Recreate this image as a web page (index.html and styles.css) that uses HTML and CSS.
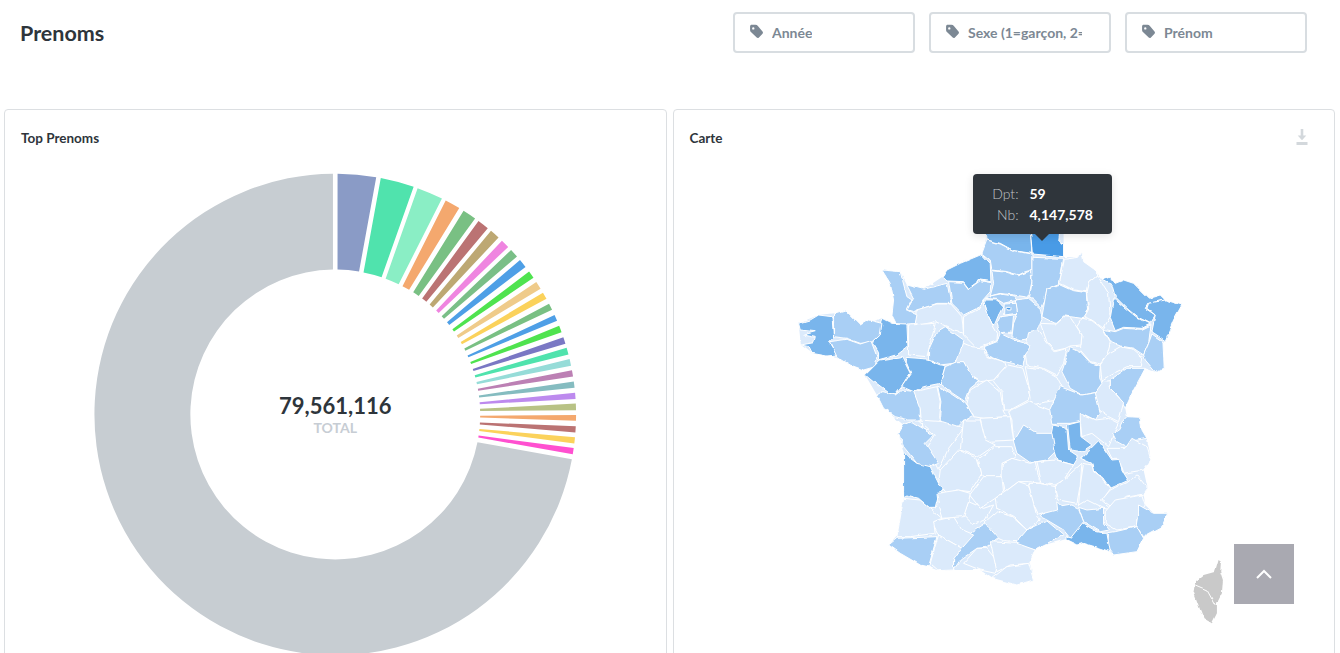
FILE: index.html
```html
<!DOCTYPE html>
<html lang="fr">
<head>
<meta charset="utf-8">
<title>Prenoms</title>
<link rel="stylesheet" href="styles.css">
</head>
<body>
<div class="page">
  <header class="topbar">
    <h1 class="page-title">Prenoms</h1>
    <div class="filters">
      <div class="filter">
        <svg class="tag" viewBox="0 0 14 14"><path fill-rule="evenodd" d="M2.500 .8h3.500c1 0 1.700.4 2.300 1l4.300 5.200c.6.700.5 1.500 0 2.100l-3.300 3.500c-.7.700-1.500.7-2.100.1L1.800 7.500C1.200 6.900 1 6.300 1 5.500V2.300C1 1.400 1.600.8 2.500.8zM4 3a1.100 1.100 0 1 0 0 2.200A1.100 1.100 0 0 0 4 3z"/></svg>
        <span class="filter-label">Année</span>
      </div>
      <div class="filter">
        <svg class="tag" viewBox="0 0 14 14"><path fill-rule="evenodd" d="M2.500 .8h3.500c1 0 1.700.4 2.300 1l4.300 5.200c.6.700.5 1.500 0 2.100l-3.300 3.500c-.7.700-1.500.7-2.100.1L1.800 7.500C1.200 6.900 1 6.300 1 5.500V2.300C1 1.400 1.600.8 2.500.8zM4 3a1.100 1.100 0 1 0 0 2.200A1.100 1.100 0 0 0 4 3z"/></svg>
        <span class="filter-label">Sexe (1=garçon, 2=fille)</span>
      </div>
      <div class="filter">
        <svg class="tag" viewBox="0 0 14 14"><path fill-rule="evenodd" d="M2.500 .8h3.500c1 0 1.700.4 2.300 1l4.300 5.200c.6.700.5 1.500 0 2.100l-3.300 3.500c-.7.700-1.500.7-2.100.1L1.800 7.500C1.200 6.900 1 6.300 1 5.500V2.300C1 1.400 1.600.8 2.500.8zM4 3a1.100 1.100 0 1 0 0 2.200A1.100 1.100 0 0 0 4 3z"/></svg>
        <span class="filter-label">Prénom</span>
      </div>
    </div>
  </header>

  <main class="cards">
    <section class="card">
      <div class="card-head"><h2 class="card-title">Top Prenoms</h2></div>
      <div class="chart">
        <svg id="donut" class="chart-svg" viewBox="5 158 661 500"></svg>
        <div class="total">
          <div class="total-value">79,561,116</div>
          <div class="total-label">TOTAL</div>
        </div>
      </div>
    </section>

    <section class="card">
      <div class="card-head">
        <h2 class="card-title">Carte</h2>
        <svg class="download" viewBox="0 0 12 16"><path d="M4.700 0h2.600v6.500h3L6 11.300 1.700 6.500h3z"/><rect x="0.500" y="13" width="11" height="3"/></svg>
      </div>
      <div class="chart">
        <svg class="chart-svg" viewBox="674 158 660 500">
          <defs>
            <filter id="rough" x="-5%" y="-5%" width="110%" height="110%" filterUnits="objectBoundingBox">
              <feTurbulence type="fractalNoise" baseFrequency="0.11" numOctaves="2" seed="4"/>
              <feDisplacementMap in="SourceGraphic" scale="3.500" xChannelSelector="R" yChannelSelector="G"/>
            </filter>
          </defs>
          <g filter="url(#rough)">
          <g class="map" transform="translate(780 220) scale(.33333)">
            <polygon class="land" points="617,60 617,20 850,20 850,112 895,112 905,95 910,125 950,160 967,180 990,172 1005,190 1030,180 1060,190 1105,235 1140,225 1155,240 1205,255 1180,300 1155,362 1148,365 1152,445 1125,455 1095,445 1060,510 1035,565 1040,590 1080,592 1085,630 1100,655 1112,720 1090,750 1102,805 1090,822 1095,855 1120,880 1162,880 1145,920 1090,950 1070,995 1000,1005 990,995 960,985 910,970 890,975 855,958 795,975 765,990 748,1030 760,1080 710,1095 635,1075 600,1050 520,1050 475,1052 445,1040 420,1035 360,1000 325,975 350,950 370,835 370,700 355,640 370,615 310,565 290,525 255,465 285,440 250,450 210,435 170,410 95,400 62,375 55,310 115,285 160,280 195,270 240,315 305,295 350,315 335,285 340,240 330,190 305,150 360,155 380,195 430,208 487,170 500,150 540,130 605,103"/>
            <polygon class="d2" points="617,20 750,20 755,100 700,92 660,70 620,60"/>
            <polygon class="d3" points="750,20 840,20 835,65 850,72 850,110 756,102"/>
            <polygon class="d1" points="605,100 620,60 660,72 700,92 755,102 755,150 735,155 715,165 680,155 635,150 630,120"/>
            <polygon class="d2" points="487,170 500,150 540,130 605,103 630,130 632,185 600,180 565,205 550,185 500,183"/>
            <polygon class="d1" points="635,152 680,157 712,167 752,152 755,185 745,232 700,225 660,220 630,228 640,190"/>
            <polygon class="d1" points="755,112 850,115 838,190 800,205 795,240 785,262 758,235 748,232 755,190"/>
            <polygon class="d0" points="838,190 852,118 895,112 905,95 910,125 945,150 950,165 925,185 918,215 880,210 850,195"/>
            <polygon class="d1" points="800,205 838,193 880,212 918,218 922,270 905,295 870,290 850,288 825,310 785,290 790,262"/>
            <polygon class="d0" points="925,185 950,165 985,220 990,290 970,325 935,300 912,292 925,268 918,215"/>
            <polygon class="d2" points="967,180 990,172 1005,190 1030,180 1060,190 1105,235 1140,225 1155,240 1105,250 1095,265 1125,285 1110,310 1070,290 1040,265 1005,230 995,195"/>
            <polygon class="d2" points="1000,235 1040,268 1070,292 1110,312 1085,325 1030,322 1005,332 990,295"/>
            <polygon class="d2" points="1105,250 1155,240 1205,255 1180,300 1155,362 1115,335 1125,285 1100,265"/>
            <polygon class="d1" points="970,328 1005,335 1030,325 1085,328 1112,315 1105,370 1090,405 1060,385 1020,378 990,365"/>
            <polygon class="d1" points="1115,342 1148,365 1152,445 1125,455 1095,420 1090,405 1105,370"/>
            <polygon class="d0" points="960,435 985,400 1020,380 1060,388 1085,410 1080,440 1040,440 1000,460 965,480"/>
            <polygon class="d0" points="905,295 935,302 968,328 990,368 980,405 960,432 930,425 900,390 905,345 890,320"/>
            <polygon class="d1" points="990,480 1040,445 1095,445 1060,510 1035,565 1015,530 990,505"/>
            <polygon class="d0" points="965,485 990,482 990,505 1030,548 1015,605 985,590 950,565 945,520"/>
            <polygon class="d1" points="845,455 870,380 900,395 930,428 960,437 958,470 965,490 945,518 905,525 870,505"/>
            <polygon class="d0" points="780,310 825,312 850,290 870,292 905,345 902,375 870,378 855,385 825,392 800,365"/>
            <polygon class="d1" points="705,240 745,235 780,265 785,295 775,320 755,355 725,360 695,350 700,310 712,280"/>
            <polygon class="d0" points="745,335 770,330 800,370 825,395 860,385 850,430 830,465 790,445 740,435 735,400"/>
            <polygon class="d1" points="660,340 690,355 730,365 752,380 735,405 728,440 700,430 670,425 625,408 612,380 650,365"/>
            <polygon class="d1" points="660,290 700,285 695,340 660,340 650,310"/>
            <polygon class="d2" points="610,240 650,240 668,260 655,285 640,320 625,290"/>
            <polygon class="d1" points="630,228 660,222 700,228 710,240 670,250 650,238 615,235"/>
            <polygon class="d1" points="672,252 708,250 712,280 670,285"/>
            <polygon class="d3" points="678,262 692,262 692,270 678,270"/>
            <polygon class="d0" points="550,290 600,265 610,240 625,290 640,320 652,340 650,362 610,378 590,385 570,365 550,345"/>
            <polygon class="d1" points="505,185 550,187 565,207 600,182 632,188 630,215 608,240 600,260 550,285 515,250"/>
            <polygon class="d1" points="380,195 430,208 500,190 512,250 470,250 400,275 380,270 400,235"/>
            <polygon class="d0" points="408,270 470,252 512,252 545,290 550,340 465,305 420,315 405,310"/>
            <polygon class="d1" points="305,150 360,155 380,230 395,240 380,270 410,285 405,310 350,315 335,285 340,240 330,190"/>
            <polygon class="d2" points="305,295 335,310 380,312 383,380 350,405 295,420 295,395 280,370"/>
            <polygon class="d2" points="55,310 90,300 115,285 155,290 160,350 145,365 170,405 140,408 95,400 85,380 62,375 100,368 105,352 70,345 105,335 60,330"/>
            <polygon class="d1" points="160,280 195,270 240,315 265,300 305,310 300,345 275,368 240,370 200,355 160,350"/>
            <polygon class="d1" points="148,365 200,358 240,372 272,362 290,410 285,440 250,450 210,435 170,410"/>
            <polygon class="d2" points="255,465 300,420 365,410 390,460 365,500 345,525 325,520 285,490"/>
            <polygon class="d0" points="385,315 465,310 440,410 385,405"/>
            <polygon class="d2" points="373,415 440,420 495,438 480,490 430,500 400,515 365,500 392,460"/>
            <polygon class="d1" points="445,390 470,335 495,320 550,360 545,410 520,430 480,435 445,420"/>
            <polygon class="d0" points="550,370 575,380 615,385 618,408 670,425 675,440 640,480 600,485 570,465 550,425 525,432"/>
            <polygon class="d1" points="530,425 550,425 575,470 595,485 570,505 555,545 510,515 480,490 495,440"/>
            <polygon class="d0" points="683,435 728,445 750,520 745,540 690,570 670,570 665,515 640,485"/>
            <polygon class="d0" points="735,440 790,448 830,470 850,510 835,540 800,545 755,555 750,520"/>
            <polygon class="d0" points="685,575 745,545 808,570 830,620 815,660 700,665 695,600"/>
            <polygon class="d1" points="808,570 840,500 905,525 945,518 960,578 945,600 905,580 900,605 870,610 815,610"/>
            <polygon class="d0" points="900,580 945,600 985,595 1015,610 1000,640 990,670 985,680 935,640 905,650 900,605"/>
            <polygon class="d1" points="290,525 305,515 345,525 365,510 405,515 420,560 420,600 385,600 345,590 310,565"/>
            <polygon class="d0" points="400,515 470,500 480,545 475,590 490,625 425,630 420,565"/>
            <polygon class="d1" points="472,498 510,520 555,550 580,585 545,605 520,630 490,620 478,590 482,545"/>
            <polygon class="d0" points="560,555 570,510 620,480 660,515 670,575 680,590 610,595 580,590"/>
            <polygon class="d0" points="600,595 690,590 700,660 610,665"/>
          </g>
          <g class="map" transform="translate(870 420) scale(.33333)">
            <polygon class="d2" points="540,60 548,15 590,25 595,90 625,110 610,135 560,120"/>
            <polygon class="d2" points="592,15 630,5 632,50 665,75 635,95 600,90"/>
            <polygon class="d2" points="632,115 685,62 725,120 750,118 755,155 772,182 720,205 695,170 670,155 665,130"/>
            <polygon class="d1" points="430,65 460,15 500,40 545,40 555,95 530,120 480,128 440,100"/>
            <polygon class="d1" points="727,40 745,30 760,0 770,-10 810,-8 815,30 830,55 790,62 768,80 740,65"/>
            <polygon class="d0" points="710,85 765,85 785,55 830,80 842,120 820,150 760,160 745,115 725,115"/>
            <polygon class="d0" points="640,130 665,135 670,155 695,175 720,207 700,235 690,240 725,270 700,265 650,240 625,255 630,195"/>
            <polygon class="d0" points="695,240 720,210 770,188 800,165 832,205 820,222 765,232 730,265"/>
            <polygon class="d0" points="705,275 735,240 815,225 825,255 805,285 800,320 740,330 705,310"/>
            <polygon class="d1" points="805,255 850,280 892,280 875,320 820,350 800,322 805,290"/>
            <polygon class="d1" points="715,338 735,335 800,320 820,355 800,395 730,405 712,380"/>
            <polygon class="d2" points="585,358 630,305 680,335 710,340 720,395 690,385 640,370 620,375"/>
            <polygon class="d1" points="625,262 650,270 700,265 700,310 718,330 690,335 640,305"/>
            <polygon class="d1" points="510,290 560,245 575,260 605,255 625,265 640,305 600,355 580,330 530,300"/>
            <polygon class="d1" points="437,345 500,315 530,303 580,345 525,375 495,390 440,375"/>
            <polygon class="d0" points="395,130 425,115 480,130 495,125 510,190 475,185 445,185 405,215 395,165"/>
            <polygon class="d0" points="500,125 555,120 610,135 580,180 555,195 515,190"/>
            <polygon class="d0" points="555,200 590,170 635,130 630,195 620,250 565,240"/>
            <polygon class="d0" points="475,190 510,190 555,200 562,270 505,285 485,240"/>
            <polygon class="d0" points="375,235 405,215 445,185 475,195 490,250 500,290 510,300 470,330 430,290 380,265"/>
            <polygon class="d0" points="345,305 380,275 425,290 470,330 440,365 400,362 360,345"/>
            <polygon class="d0" points="280,285 295,245 340,265 370,255 345,300 310,315"/>
            <polygon class="d1" points="250,405 300,340 345,310 385,355 350,382 320,385 270,420 250,450"/>
            <polygon class="d0" points="185,305 250,290 275,330 310,345 275,385 205,345"/>
            <polygon class="d0" points="80,350 100,235 150,240 180,265 215,295 190,305 195,340 120,350"/>
            <polygon class="d2" points="100,100 140,130 175,130 205,190 232,195 205,225 195,265 180,265 145,235 110,225 100,230"/>
            <polygon class="d1" points="55,375 80,355 200,350 175,440 150,435 90,400"/>
            <polygon class="d0" points="200,360 205,345 275,385 250,420 250,450 205,452 180,430"/>
            <polygon class="d0" points="280,430 320,385 350,385 385,430 375,460 330,450"/>
            <polygon class="d0" points="360,365 440,370 495,390 478,430 420,435 380,455"/>
            <polygon class="d0" points="365,475 410,440 475,430 490,480 440,495"/>
            <polygon class="d0" points="205,190 210,150 265,90 320,115 335,160 300,215 260,210 230,220"/>
            <polygon class="d0" points="145,0 220,5 280,25 235,85 205,150 170,85 195,45"/>
            <polygon class="d0" points="280,0 330,0 345,60 375,75 325,110 270,90"/>
            <polygon class="d1" points="100,15 125,5 190,45 165,70 205,130 180,140 140,130 100,80 85,40"/>
            <polygon class="d0" points="325,120 375,80 425,80 435,110 395,130 395,170 360,180 335,165"/>
            <polygon class="d0" points="298,225 340,170 395,170 400,215 375,235 330,265"/>
            <polygon class="d0" points="200,220 265,210 300,220 295,245 280,290 215,295 205,260"/>
            <polygon class="corsica" points="1045,420 1052,425 1050,455 1058,480 1055,520 1040,550 1040,580 1025,610 1000,595 990,570 970,515 975,485 1000,465 1035,455"/>
            <polyline class="corsica-line" points="975,495 1010,510 1035,555"/>
          </g>
          </g>
        </svg>
        <div class="tooltip">
          <div class="tooltip-row"><span class="tooltip-key">Dpt:</span><span class="tooltip-val">59</span></div>
          <div class="tooltip-row"><span class="tooltip-key">Nb:</span><span class="tooltip-val">4,147,578</span></div>
        </div>
      </div>
    </section>
  </main>
  <button class="to-top" aria-label="Haut de page">
    <svg viewBox="0 0 18 12" class="to-top-icon"><polyline points="2,10 9,3 16,10"/></svg>
  </button>
</div>
<script src="chart.js"></script>
</body>
</html>
```

FILE: styles.css
```css
* { box-sizing: border-box; }
html, body { margin: 0; height: 100%; background: #fff; }
body { font-family: Lato, "Open Sans", sans-serif; color: #2e353b; overflow: hidden; }
.page { height: 653px; overflow: hidden; position: relative; }

.topbar { display: flex; justify-content: space-between; align-items: flex-start; height: 109px; padding: 12px 33px 0 20px; }
.page-title { margin: 0; font-size: 21.5px; line-height: 42px; font-weight: 700; color: #2e353b; }
.filters { display: flex; gap: 14px; }
.filter { width: 182px; height: 41px; border: 2px solid #d8dde1; border-radius: 4px; display: flex; align-items: center; padding: 0 27px 0 14px; background: #fff; }
.tag { width: 15px; height: 15px; flex: none; fill: #7c8894; margin-right: 8px; margin-top: -3px; }
.filter-label { font-size: 14px; font-weight: 700; color: #7c8894; white-space: nowrap; overflow: hidden; }

.cards { display: flex; gap: 6px; padding: 0 5px 0 4px; }
.card { flex: 1 1 0; height: 600px; border: 1px solid #dcdfe2; border-radius: 4px; background: #fff; overflow: hidden; }
.card-head { height: 48px; display: flex; justify-content: space-between; align-items: flex-start; padding: 20px 26px 0 16px; }
.card-title { margin: 0; font-size: 13.500px; line-height: 17px; font-weight: 700; color: #2e353b; }
.download { width: 12px; height: 16px; fill: #d3d8dc; margin-top: -1px; }

.chart { position: relative; height: 500px; }
.chart-svg { display: block; width: 100%; height: 500px; }
.total { position: absolute; left: 0; right: 0; top: 233px; text-align: center; pointer-events: none; }
.total-value { font-size: 22px; line-height: 30px; font-weight: 700; color: #2e353b; }
.total-label { font-size: 14px; line-height: 14px; font-weight: 700; color: #c7cdd4; }

.map polygon { stroke: #fff; stroke-width: 3; stroke-linejoin: round; }
.map .land { fill: #dbeafb; stroke: none; }
.d0 { fill: #dbeafb; }
.d1 { fill: #a9cff5; }
.d2 { fill: #79b5ec; }
.d3 { fill: #4a9be6; }
.map .corsica { fill: #c9c9c9; stroke: none; }
.corsica-line { fill: none; stroke: #fff; stroke-width: 3; }

.tooltip { position: absolute; left: 299px; top: 16px; width: 139px; height: 60px; padding: 9px 0 0 0; background: #2f353b; border-radius: 4px; box-shadow: 0 2px 8px rgba(0,0,0,.12); color: #fff; font-size: 14px; line-height: 21px; }
.tooltip::after { content: ""; position: absolute; left: 62px; bottom: -7px; border-style: solid; border-width: 7px 7px 0; border-color: #2f353b transparent transparent; }
.tooltip-row { display: flex; }
.tooltip-key { width: 46px; text-align: right; color: #c0c4c8; font-weight: 300; }
.tooltip-val { margin-left: 11px; font-weight: 700; color: #fff; }

.to-top { position: absolute; left: 1234px; top: 544px; width: 60px; height: 60px; padding: 0; border: 0; background: #a9a9b1; display: flex; align-items: center; justify-content: center; }
.to-top-icon { width: 18px; height: 12px; fill: none; stroke: #fff; stroke-width: 2; }
```

FILE: chart.js
```js
// Donut slices: outer start/end angle (degrees clockwise from 12 o'clock) and colour.
var SLICES = [
  [0.55, 9.8, '#8a9bc6'], [10.9, 19, '#50e3ad'], [20, 26.3, '#8aeec5'], [27.3, 31, '#f4a86e'],
  [32.2, 35.5, '#79c083'], [36.5, 39.3, '#bb7373'], [40.3, 42.7, '#bda873'], [43.8, 45.9, '#ef85e0'],
  [46.9, 49, '#7abf87'], [50.1, 52.2, '#4e9fe6'], [53.6, 55.4, '#4fe34f'], [56.6, 58.5, '#efcb8a'],
  [59.6, 61.3, '#fbd25b'], [62.6, 64.2, '#79c083'], [65.6, 67.1, '#4e9fe6'], [68.4, 70, '#4fe34f'],
  [71.3, 72.9, '#7a78c4'], [73.9, 75.6, '#50e3ad'], [76.7, 78.3, '#96dcd8'], [79.4, 80.9, '#bc80b4'],
  [82.1, 83.6, '#85bcc0'], [84.8, 86.3, '#bd8aee'], [87.4, 89, '#b8c285'], [90.1, 91.5, '#f4a86e'],
  [92.8, 94.3, '#bb7373'], [95.4, 96.9, '#fbd25b'], [98, 99.5, '#ff50d0'], [100.7, 359.45, '#c7cdd2']
];
var CX = 335.5, CY = 414.5, R = 241, r = 145, INSET = 0.35;

function pt(radius, deg) {
  var a = deg * Math.PI / 180;
  return (CX + radius * Math.sin(a)).toFixed(2) + ' ' + (CY - radius * Math.cos(a)).toFixed(2);
}

var svg = document.getElementById('donut');
SLICES.forEach(function (s) {
  var large = s[1] - s[0] > 180 ? 1 : 0;
  var d = 'M' + pt(R, s[0]) + 'A' + R + ' ' + R + ' 0 ' + large + ' 1 ' + pt(R, s[1]) +
          'L' + pt(r, s[1] - INSET) + 'A' + r + ' ' + r + ' 0 ' + large + ' 0 ' + pt(r, s[0] + INSET) + 'Z';
  var path = document.createElementNS('http://www.w3.org/2000/svg', 'path');
  path.setAttribute('d', d);
  path.setAttribute('fill', s[2]);
  svg.appendChild(path);
});
```
